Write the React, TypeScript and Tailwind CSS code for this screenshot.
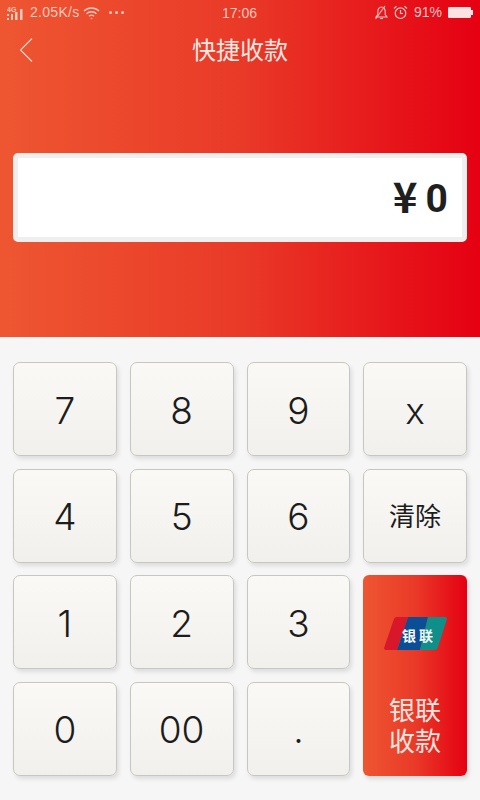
const FONT = "font-['Liberation_Sans','Noto_Sans_CJK_SC',sans-serif]";

function Key({ label, className = "" }: { label: string; className?: string }) {
  return (
    <button className={`flex items-center justify-center rounded-[7px] border-[1.500px] border-[#c6c6c3] bg-linear-to-b/srgb from-[#faf9f6] to-[#f1f0ed] pt-[3px] text-[#1c1c1c] shadow-[2px_3px_4px_rgba(0,0,0,0.10)] ${className || "font-['Inter',sans-serif] text-[37px] font-light"}`}>
      {label}
    </button>
  );
}

function Status() {
  return (
    <div className="relative flex h-[25px] items-center text-[14px] text-[#f8c9bd]">
      <div className="flex items-center pl-[7px]">
        <svg width="18" height="14" viewBox="0 0 18 14" fill="currentColor">
          <text x="0" y="5.500" fontSize="7" fontWeight="700" fontFamily="'Liberation Sans',sans-serif">4G</text>
          <rect x="0" y="8" width="2" height="2" />
          <rect x="0" y="12" width="2" height="2" />
          <rect x="4" y="8" width="2" height="6" />
          <rect x="8" y="6" width="2.500" height="8" />
          <rect x="13" y="3" width="2.500" height="11" />
        </svg>
        <span className="ml-[5px] tracking-[0.300px]">2.05K/s</span>
        <svg className="ml-[3px]" width="17" height="14" viewBox="0 0 17 14" fill="none" stroke="currentColor" strokeWidth="1.300">
          <path d="M1 5c4.200-4 10.800-4 15 0" />
          <path d="M3.500 7.700c2.800-2.600 7.200-2.600 10 0" />
          <path d="M6 10.300c1.400-1.300 3.600-1.300 5 0" />
          <circle cx="8.500" cy="12.500" r="0.800" fill="currentColor" stroke="none" />
        </svg>
        <span className="ml-[9px] flex gap-[3px]">
          <i className="size-[3px] rounded-full bg-[#f8c9bd]" />
          <i className="size-[3px] rounded-full bg-[#f8c9bd]" />
          <i className="size-[3px] rounded-full bg-[#f8c9bd]" />
        </span>
      </div>
      <span className="absolute left-[222px] top-[3px] text-[14px]">17:06</span>
      <div className="ml-auto flex items-center pr-[7px] text-[#f7c4c6]">
        <svg width="15" height="15" viewBox="0 0 15 15" fill="none" stroke="currentColor" strokeWidth="1.100">
          <path d="M2 12h11l-1.800-2.500V6.500C11.200 4 9.800 2 7.500 2S3.800 4 3.800 6.500v3z" />
          <path d="M6 13.500h3" />
          <path d="M1.500 14 11 1" />
        </svg>
        <svg className="ml-[4px]" width="15" height="15" viewBox="0 0 15 15" fill="none" stroke="currentColor" strokeWidth="1.200">
          <circle cx="7.500" cy="8.200" r="5.300" />
          <path d="M7.500 5v3.500h2.500" />
          <path d="M1 3.500 3.500 1.200M14 3.500 11.500 1.200" />
        </svg>
        <span className="ml-[6px]">91%</span>
        <div className="ml-[6px] flex items-center">
          <div className="h-[11px] w-[23px] rounded-[1px] border border-[#fbe3e3] bg-[#fbe3e3]" />
          <div className="h-[5px] w-[2px] bg-[#fbe3e3]" />
        </div>
      </div>
    </div>
  );
}

function UnionPay() {
  return (
    <svg width="63" height="33" viewBox="0 0 63 33">
      <path d="M13 0h11L13 33H2a2 2 0 0 1-1.800-2.500L10 2a3 3 0 0 1 3-2z" fill="#d9172b" />
      <path d="M24 0h20L36 33H13z" fill="#0a4f95" />
      <path d="M44 0h17a2 2 0 0 1 1.800 2.500L54 30a4 4 0 0 1-4 3H36z" fill="#0e8f8a" />
      <text x="18" y="24" fontSize="14" fontWeight="700" fill="#f4f8f8" fontFamily="'Noto Sans CJK SC',sans-serif">银</text>
      <text x="35" y="24" fontSize="14" fontWeight="700" fill="#f4f8f8" fontFamily="'Noto Sans CJK SC',sans-serif">联</text>
    </svg>
  );
}

export default function App() {
  return (
    <div className={`flex h-[800px] w-[480px] flex-col overflow-hidden bg-[#f6f6f6] ${FONT}`}>
      <div className="h-[337px] bg-linear-to-r/srgb from-[#ee5631] via-[#e93a28] to-[#e50012]">
        <Status />
        <div className="relative flex h-[51px] items-center justify-center text-[24px] text-[#fde9e4]">
          <svg className="absolute left-[17px] top-[12px]" width="18" height="26" viewBox="0 0 18 26" fill="none" stroke="#fbdcd3" strokeWidth="1.100">
            <path d="M15 1.500 3.500 13 15 24.500" />
          </svg>
          快捷收款
        </div>
        <div className="mx-[13px] mt-[77px] flex h-[89px] items-center justify-end rounded-[5px] border-[5px] border-[#efefef] bg-white pr-[14px] pt-[3px] font-['Roboto',sans-serif] text-[39px] font-bold text-[#1f1f1f]">
          <span className="mb-[8px] mr-[8px] font-['Noto_Sans_CJK_SC',sans-serif] text-[42px] leading-none">¥</span>0
        </div>
      </div>
      <div className="grid grid-cols-4 gap-x-[13px] gap-y-[12.500px] px-[13px] pt-[25px] [grid-auto-rows:94px]">
        <Key label="7" />
        <Key label="8" />
        <Key label="9" />
        <Key label="x" />
        <Key label="4" />
        <Key label="5" />
        <Key label="6" />
        <Key label="清除" className="text-[26px]" />
        <Key label="1" />
        <Key label="2" />
        <Key label="3" />
        <button className="row-span-2 flex flex-col items-center rounded-[6px] bg-linear-to-r/srgb from-[#ee5631] via-[#e93a28] to-[#e50012] pt-[42px] text-[26px] leading-[31px] text-[#fde6e0] shadow-[2px_3px_4px_rgba(0,0,0,0.12)]">
          <UnionPay />
          <span className="mt-[46px]">银联</span>
          <span>收款</span>
        </button>
        <Key label="0" />
        <Key label="00" />
        <Key label="." />
      </div>
    </div>
  );
}
